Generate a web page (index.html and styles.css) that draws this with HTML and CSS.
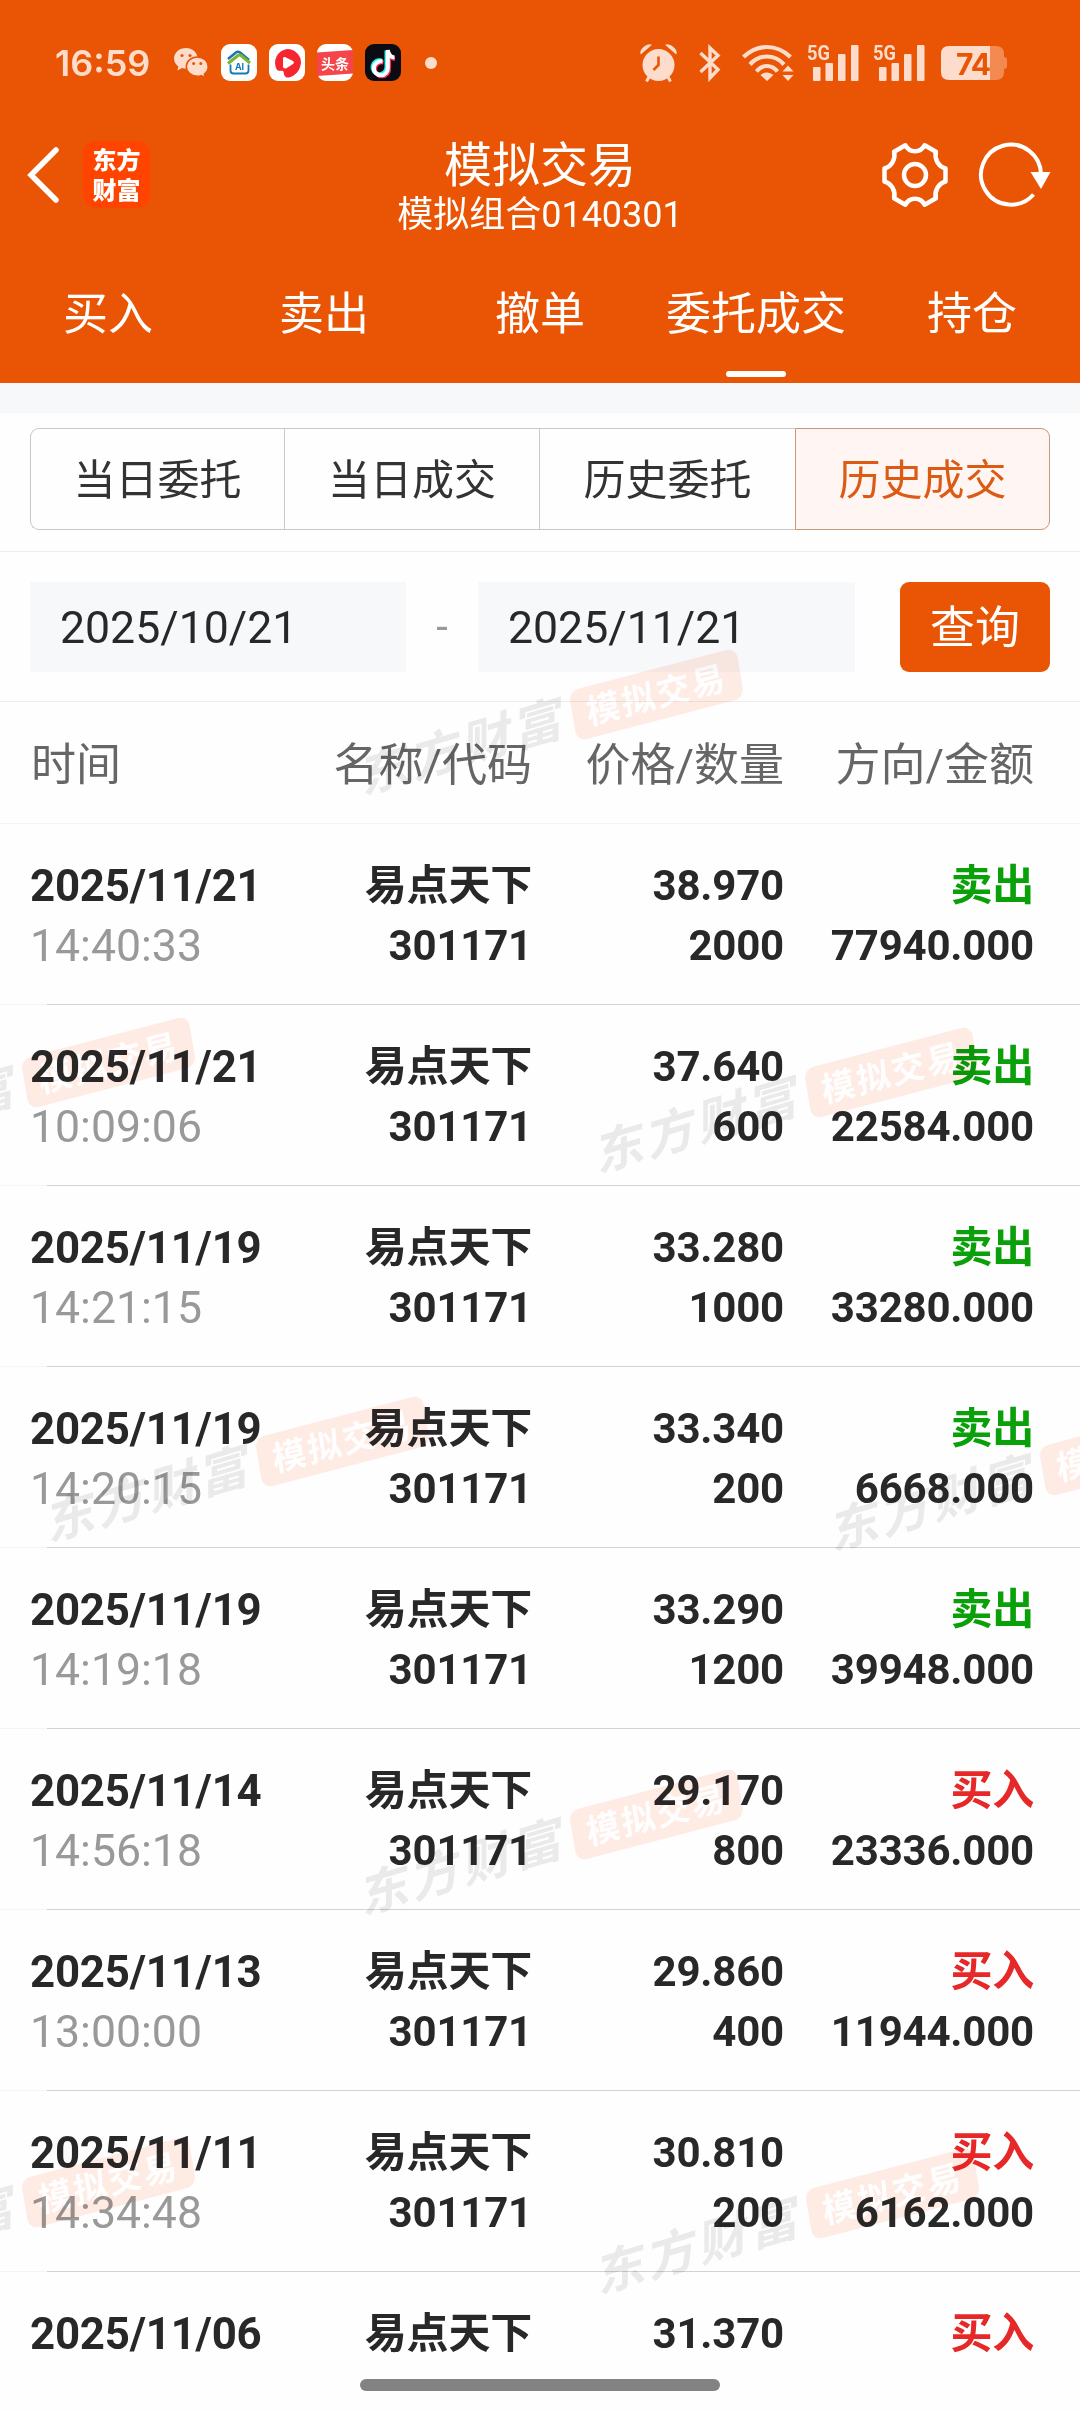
FILE: index.html
```html
<!DOCTYPE html>
<html lang="zh-CN">
<head>
<meta charset="utf-8">
<title>模拟交易</title>
<link rel="stylesheet" href="styles.css">
</head>
<body>
<div class="screen">
  <header class="top">
    <div class="status">
      <span class="clock">16:59</span>
      <svg class="wechat" width="34" height="30" viewBox="0 0 34 30">
        <path fill="#fddccb" d="M12 0C5.300 0 0 4.700 0 10.500c0 3.200 1.700 6 4.300 8L3.400 22.500l4.700-2.500c1.500.500 3 .700 4.700.700C19 20.500 23.500 15.600 23.500 10.300 23.500 4.600 18.400 0 12 0z"/>
        <path fill="#fddccb" stroke="#e95504" stroke-width="1.500" d="M23.300 9c-6.200 0-11 4.300-11 9.600s4.800 9.600 11 9.600c1.400 0 2.700-.200 3.900-.600l4 2-.9-3.400c2.400-1.800 3.900-4.500 3.900-7.600C34.200 13.300 29.400 9 23.300 9z"/>
        <g fill="#e95504"><circle cx="8" cy="7.500" r="1.600"/><circle cx="16" cy="7.500" r="1.600"/><circle cx="19.600" cy="15.500" r="1.500"/><circle cx="26.800" cy="15.500" r="1.500"/></g>
      </svg>
      <svg class="app" width="36" height="37" viewBox="0 0 36 37">
        <rect width="36" height="37" rx="9" fill="#fff"/>
        <path d="M7 15L15 8.500q2-1.500 4 0L28 16" fill="none" stroke="#1678b4" stroke-width="2.600"/>
        <path d="M7 19.500L17 11.500q1.500-1 3 0L29 19" fill="none" stroke="#7db52e" stroke-width="3"/>
        <path d="M9.500 20.500v6q0 3 3 3h12q3 0 3-3v-6" fill="none" stroke="#1678b4" stroke-width="1.800"/>
        <text x="18.500" y="26" class="ai">AI</text>
      </svg>
      <svg class="app" width="36" height="37" viewBox="0 0 36 37">
        <rect width="36" height="37" rx="9" fill="#fff"/>
        <path fill="#f5262f" d="M18 5A14 13.800 0 0 1 32 19c-1 8-6 13-12 14.500-4 .500-5-2-5.500-6C13 26 11 27.500 8 26A14 14 0 0 1 18 5z"/>
        <path fill="#fff" d="M14 14.500q0-2 2-1.500l8 4q1.800 1.300 0 3l-7 4.500q-3 .500-3-2z"/>
      </svg>
      <svg class="app" width="36" height="37" viewBox="0 0 36 37">
        <rect width="36" height="37" rx="9" fill="#fff"/>
        <path fill="#f5444a" d="M0 8.500L36 6v23.500L0 32z"/>
        <text x="18" y="24.500" class="news">头条</text>
      </svg>
      <svg class="app" width="36" height="37" viewBox="0 0 36 37">
        <rect width="36" height="37" rx="9" fill="#0b0b14"/>
        <g fill="none" stroke-width="4" transform="translate(-.5 0)">
          <path stroke="#25f4ee" d="M17 16.500a7 7 0 1 0 5 6.500V6.500"/>
          <path stroke="#fe2c55" d="M19 18.500a7 7 0 1 0 5.500 6V8.500q1 6 6 6.500"/>
          <path stroke="#fff" d="M18 17.500a7 7 0 1 0 5.300 6V6q1 7 6.700 7.500"/>
        </g>
      </svg>
      <i class="dot"></i>
      <svg class="alarm" width="38" height="38" viewBox="0 0 38 38">
        <g fill="#fddccb"><circle cx="18.500" cy="21" r="16"/>
        <path d="M.800 10.500Q-1 7 3.500 3 8-1 12 .800zM36.200 10.500Q38 7 33.500 3 29-1 25 .800z"/></g>
        <path d="M9 33l-2.500 4.500M28 33l2.500 4.500" stroke="#fddccb" stroke-width="3"/>
        <path d="M18.500 12.500v8.500l-5 5" stroke="#e95504" stroke-width="2.600" fill="none"/>
      </svg>
      <svg class="bt" width="22" height="38" viewBox="0 0 22 38">
        <path d="M1.500 9L19 25.500 11 34V4l8 7.500L1.500 28" fill="none" stroke="#fddccb" stroke-width="3.400"/>
      </svg>
      <svg class="wifi" width="53" height="38" viewBox="0 0 53 38">
        <g fill="none" stroke="#fddccb" stroke-width="4.200"><path d="M1.500 13Q12 3 25 3t23.500 10"/><path d="M8 20.500Q15 12.500 25 12.500T42 20.500"/><path d="M14.500 27.500Q19 22 25 22t10.500 5.500"/></g>
        <path fill="#fddccb" d="M25 37l-6.500-6q6.500-5 13 0zM46 21.500l5.500 6h-11zM46 37l5.500-6h-11z"/>
      </svg>
      <svg class="sig" width="52" height="38" viewBox="0 0 52 38">
        <text x="0" y="16" textLength="23" lengthAdjust="spacingAndGlyphs" class="g5">5G</text>
        <g fill="#fddccb"><rect x="6" y="23" width="7.500" height="14" rx="1"/><rect x="18.500" y="19" width="7.500" height="18" rx="1"/><rect x="31" y="10" width="7.500" height="27" rx="1"/><rect x="44" y="1" width="7.500" height="36" rx="1"/></g>
      </svg>
      <svg class="sig sig2" width="52" height="38" viewBox="0 0 52 38">
        <text x="0" y="16" textLength="23" lengthAdjust="spacingAndGlyphs" class="g5">5G</text>
        <g fill="#fddccb"><rect x="6" y="23" width="7.500" height="14" rx="1"/><rect x="18.500" y="19" width="7.500" height="18" rx="1"/><rect x="31" y="10" width="7.500" height="27" rx="1"/><rect x="44" y="1" width="7.500" height="36" rx="1"/></g>
      </svg>
      <svg class="batt" width="67" height="34" viewBox="0 0 67 34">
        <path fill="#f28a52" d="M49 0h6q8 0 8 8v3q3 0 3 3v6q0 3-3 3v3q0 8-8 8h-6z"/>
        <path fill="#fddccb" d="M8 0h41v34H8q-8 0-8-8V8q0-8 8-8z"/>
        <text x="32" y="28.500" class="pct">74</text>
      </svg>
    </div>
    <div class="nav">
      <svg class="back" width="34" height="58" viewBox="0 0 34 58"><path d="M30 4L5 29l25 25" fill="none" stroke="#fff" stroke-width="5.500" stroke-linecap="round"/></svg>
      <div class="brand"><span>东方</span><span>财富</span></div>
      <div class="titles"><h1>模拟交易</h1><p>模拟组合0140301</p></div>
      <svg class="gear" width="68" height="68" viewBox="-34 -34 68 68">
        <g fill="none" stroke="#fff" stroke-width="4.500" stroke-linejoin="round">
          <path d="M-9.600-29.700A10.700 10.700 0 0 0 9.600-29.700L20.900-23.200A14 14 0 0 0 30.500-6.500V6.500A14 14 0 0 0 20.900 23.200L9.600 29.700A10.700 10.700 0 0 0-9.600 29.700L-20.900 23.200A14 14 0 0 0-30.500 6.500V-6.500A14 14 0 0 0-20.900-23.200Z"/>
          <circle r="11"/>
        </g>
      </svg>
      <svg class="refresh" width="72" height="68" viewBox="0 0 72 68">
        <path d="M54.500 53.500A30 30 0 1 1 62 34" fill="none" stroke="#fff" stroke-width="4"/>
        <path d="M51.500 31h20L62 48z" fill="#fff"/>
      </svg>
    </div>
    <nav class="tabs">
      <span>买入</span><span>卖出</span><span>撤单</span><span class="on">委托成交</span><span>持仓</span>
    </nav>
  </header>
  <div class="gap"></div>
  <div class="segwrap"><div class="seg">
    <span>当日委托</span><span>当日成交</span><span>历史委托</span><span class="on">历史成交</span>
  </div></div>
  <div class="filter">
    <div class="date">2025/10/21</div><span class="dash">-</span><div class="date">2025/11/21</div><div class="query">查询</div>
  </div>
  <div class="thead"><span>时间</span><span>名称/代码</span><span>价格/数量</span><span>方向/金额</span></div>
  <main class="list">
    <div class="row"><b class="d">2025/11/21</b><b>易点天下</b><b>38.970</b><b class="sell">卖出</b><span class="t">14:40:33</span><b>301171</b><b>2000</b><b>77940.000</b></div>
    <div class="row"><b class="d">2025/11/21</b><b>易点天下</b><b>37.640</b><b class="sell">卖出</b><span class="t">10:09:06</span><b>301171</b><b>600</b><b>22584.000</b></div>
    <div class="row"><b class="d">2025/11/19</b><b>易点天下</b><b>33.280</b><b class="sell">卖出</b><span class="t">14:21:15</span><b>301171</b><b>1000</b><b>33280.000</b></div>
    <div class="row"><b class="d">2025/11/19</b><b>易点天下</b><b>33.340</b><b class="sell">卖出</b><span class="t">14:20:15</span><b>301171</b><b>200</b><b>6668.000</b></div>
    <div class="row"><b class="d">2025/11/19</b><b>易点天下</b><b>33.290</b><b class="sell">卖出</b><span class="t">14:19:18</span><b>301171</b><b>1200</b><b>39948.000</b></div>
    <div class="row"><b class="d">2025/11/14</b><b>易点天下</b><b>29.170</b><b class="buy">买入</b><span class="t">14:56:18</span><b>301171</b><b>800</b><b>23336.000</b></div>
    <div class="row"><b class="d">2025/11/13</b><b>易点天下</b><b>29.860</b><b class="buy">买入</b><span class="t">13:00:00</span><b>301171</b><b>400</b><b>11944.000</b></div>
    <div class="row"><b class="d">2025/11/11</b><b>易点天下</b><b>30.810</b><b class="buy">买入</b><span class="t">14:34:48</span><b>301171</b><b>200</b><b>6162.000</b></div>
    <div class="row"><b class="d">2025/11/06</b><b>易点天下</b><b>31.370</b><b class="buy">买入</b></div>
  </main>
  <div class="marks">
    <div class="mark m1"><span class="word">东方财富</span><span class="badge">模拟交易</span></div>
    <div class="mark m2"><span class="word">东方财富</span><span class="badge">模拟交易</span></div>
    <div class="mark m3"><span class="word">东方财富</span><span class="badge">模拟交易</span></div>
    <div class="mark m4"><span class="word">东方财富</span><span class="badge">模拟交易</span></div>
    <div class="mark m5"><span class="word">东方财富</span><span class="badge">模拟交易</span></div>
    <div class="mark m6"><span class="word">东方财富</span><span class="badge">模拟交易</span></div>
    <div class="mark m7"><span class="word">东方财富</span><span class="badge">模拟交易</span></div>
    <div class="mark m8"><span class="word">东方财富</span><span class="badge">模拟交易</span></div>
  </div>
  <div class="home"></div>
</div>
</body>
</html>
```
FILE: styles.css
```css
* { box-sizing: border-box; }
body { margin: 0; background: #fefefe; font-family: Roboto, "Noto Sans CJK SC", sans-serif; color: #282828; }
h1, p { margin: 0; font-weight: 400; }
svg { display: block; flex: none; overflow: visible; }
.screen { position: relative; width: 1080px; height: 2412px; overflow: hidden; background: #fefefe; }

.top { height: 383px; background: #e95504; color: #fff; display: flex; flex-direction: column; }
.status { flex: none; height: 125px; padding: 0 72px 0 55px; display: flex; align-items: center; color: #fddccb; }
.clock { width: 120px; font: 600 36px/40px Inter, sans-serif; }
.wechat { margin-right: 13px; }
.app { margin-right: 12px; }
.dot { width: 12px; height: 12px; border-radius: 50%; background: #fddccb; margin-left: 12px; flex: none; }
.alarm { margin-left: 203px; }
.bt { margin-left: 21px; }
.wifi { margin-left: 21px; }
.sig { margin-left: 12px; }
.sig2 { margin-left: 14px; }
.batt { margin-left: 16px; }
.ai { font: 700 9px Inter, sans-serif; fill: #1678b4; text-anchor: middle; }
.news { font: 700 14px "Noto Sans CJK SC", sans-serif; fill: #fff; text-anchor: middle; }
.g5 { font: 700 21px Roboto, sans-serif; fill: #fddccb; }
.pct { font: 700 30px Inter, sans-serif; fill: #e95504; text-anchor: middle; letter-spacing: -1px; }

.nav { flex: none; height: 120px; display: flex; align-items: center; padding: 0 29px 21px 26px; }
.back { margin-right: 23px; }
.brand { width: 67px; height: 67px; border-radius: 13px; background: #ff4400; font: 900 24px/30px "Noto Sans CJK SC", sans-serif; display: flex; flex-direction: column; align-items: center; justify-content: center; padding-bottom: 2px; }
.titles { flex: 1; text-align: center; padding-left: 49px; padding-top: 29px; }
.titles h1 { font-size: 48px; line-height: 52px; }
.titles p { font-size: 36px; line-height: 46px; }
.gear { margin-right: 30px; }
.tabs { flex: none; height: 138px; display: grid; grid-template-columns: repeat(5, 1fr); text-align: center; font-size: 45px; line-height: 140px; }
.tabs .on { position: relative; }
.tabs .on::after { content: ""; position: absolute; left: 78px; top: 126px; width: 60px; height: 6px; border-radius: 3px; background: #fff; }

.gap { height: 30px; background: #f6f8fa; }
.segwrap { height: 139px; padding: 15px 30px 0; border-bottom: 1px solid #ededed; }
.seg { height: 102px; display: grid; grid-template-columns: 254fr 255fr 256fr 255fr; font-size: 42px; text-align: center; color: #333; }
.seg span { height: 102px; border: 1px solid #c8c8c8; border-right: 0; line-height: 104px; }
.seg span:first-child { border-radius: 9px 0 0 9px; }
.seg .on { border: 1px solid #c89878; border-radius: 0 9px 9px 0; background: #fff5f2; color: #dc5a14; }

.filter { height: 150px; padding: 0 30px; display: flex; align-items: center; border-bottom: 1px solid #ededed; }
.date { width: 376px; height: 90px; background: #f7f8fa; padding-left: 30px; font-size: 44.600px; line-height: 93px; }
.dash { width: 72px; text-align: center; color: #999; font-size: 42px; }
.dash + .date { width: 377px; }
.query { width: 150px; height: 90px; margin-left: 45px; border-radius: 9px; background: #e95504; color: #fff; text-align: center; font-size: 45px; line-height: 94px; }

.thead, .row { display: grid; grid-template-columns: 302px 200px 252px 250px; padding-left: 30px; text-align: right; }
.thead { height: 122px; border-bottom: 1px solid #f5f5f5; font-size: 45px; line-height: 128px; color: #666; }
.thead span:first-child { text-align: left; padding-left: 1px; }
.thead span { white-space: nowrap; }
.row { height: 181px; padding-top: 32px; grid-auto-rows: 60px; font-size: 42px; line-height: 60px; border-bottom: 1px solid; border-image: linear-gradient(to right, #f5f5f5 48px, #d2d2d2 48px) 1; }
.row b { font-weight: 700; letter-spacing: -.2px; }
.row .d, .row .t { text-align: left; }
.row .d { font-size: 43.800px; }
.row .t { font-size: 44.600px; color: #999; font-weight: 400; }
.row .sell { color: #0aa00a; }
.row .buy { color: #e62828; }

.marks { position: absolute; inset: 0; overflow: hidden; pointer-events: none; mix-blend-mode: multiply; }
.mark { position: absolute; width: 0; height: 0; }
.word { position: absolute; left: -301px; top: 13px; width: 220px; height: 68px; font: 700 50px/68px "Noto Sans CJK SC", sans-serif; letter-spacing: 3.500px; text-align: center; white-space: nowrap; color: #ebebeb; transform: matrix(.959,-.284,0,1,0,0); }
.badge { position: absolute; left: -86px; top: -26px; width: 173px; height: 51px; border-radius: 10px; background: #ffece5; color: #fff; font: 700 34px/48px "Noto Sans CJK SC", sans-serif; letter-spacing: 2px; text-align: center; white-space: nowrap; transform: matrix(.968,-.252,.165,.986,0,0); }
.m1 { left: 656px; top: 695px; }
.m2 { left: 108px; top: 1063px; }
.m3 { left: 891px; top: 1073px; }
.m4 { left: 342px; top: 1442px; }
.m5 { left: 1126px; top: 1451px; }
.m6 { left: 656px; top: 1815px; }
.m7 { left: 108px; top: 2183px; }
.m8 { left: 892px; top: 2194px; }
.home { position: absolute; left: 360px; top: 2379px; width: 360px; height: 12px; border-radius: 6px; background: #828282; }
```
